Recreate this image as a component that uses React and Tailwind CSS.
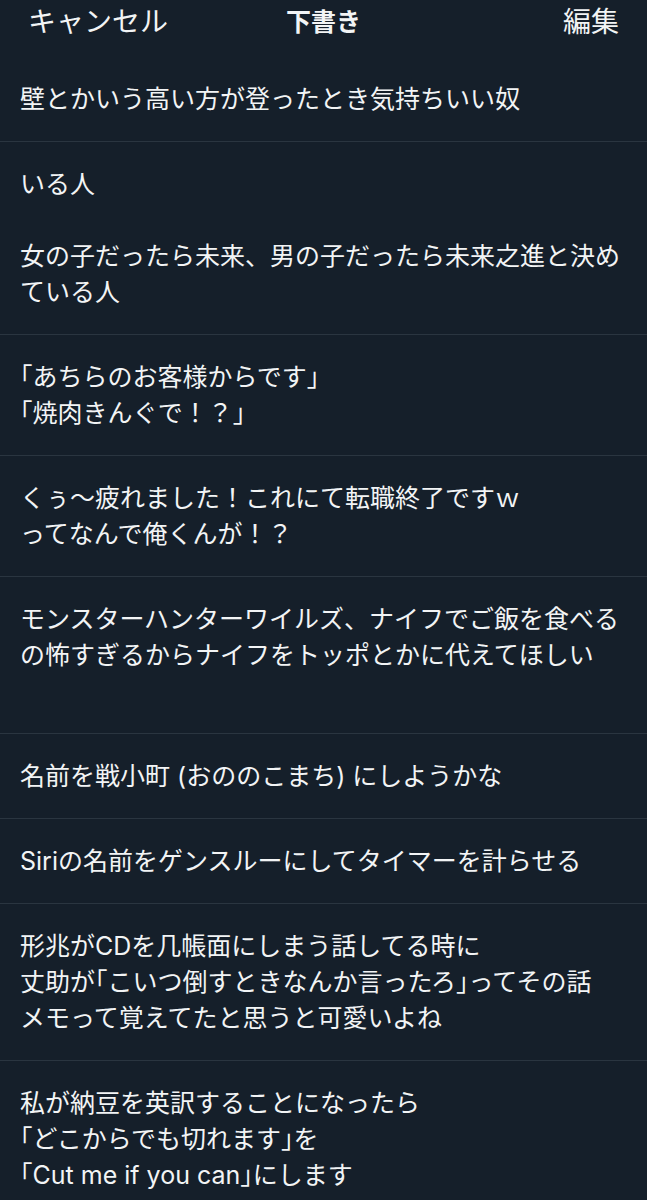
const drafts = [
  "壁とかいう高い方が登ったとき気持ちいい奴",
  "いる人\n\n女の子だったら未来、男の子だったら未来之進と決め\nている人",
  "「あちらのお客様からです」\n「焼肉きんぐで！？」",
  "くぅ〜疲れました！これにて転職終了ですｗ\nってなんで俺くんが！？",
  "モンスターハンターワイルズ、ナイフでご飯を食べる\nの怖すぎるからナイフをトッポとかに代えてほしい\n\u00a0",
  "名前を戦小町 (おののこまち) にしようかな",
  "Siriの名前をゲンスルーにしてタイマーを計らせる",
  "形兆がCDを几帳面にしまう話してる時に\n丈助が「こいつ倒すときなんか言ったろ」ってその話\nメモって覚えてたと思うと可愛いよね",
  "私が納豆を英訳することになったら\n「どこからでも切れます」を\n「Cut me if you can」にします",
]

// brackets are set half-width, like the iOS rendering
function renderText(text) {
  return text.split(/([「」])/).map((part, i) =>
    part === "「" || part === "」" ? (
      <span key={i} className="[font-feature-settings:'halt']">{part}</span>
    ) : (
      part
    )
  )
}

export default function App() {
  return (
    <div
      className="w-[647px] h-[1200px] overflow-hidden bg-[#151f2a] text-[#f2f4f5]"
      style={{ fontFamily: '"Inter", "Noto Sans CJK JP", sans-serif' }}
    >
      <header className="h-[57px] flex items-start justify-between px-[28px] pt-[4px]">
        <button className="text-[28px] leading-[36px] w-[150px] text-left">キャンセル</button>
        <h1 className="text-[25px] leading-[36px] font-bold">下書き</h1>
        <button className="text-[28px] leading-[36px] w-[150px] text-right">編集</button>
      </header>

      <ul>
        {drafts.map((text, i) => (
          <li
            key={i}
            className="px-[20px] pt-[24px] pb-[24px] border-b border-[#2a3540] text-[25px] leading-[36px] whitespace-pre"
          >
            {renderText(text)}
          </li>
        ))}
      </ul>
    </div>
  )
}
